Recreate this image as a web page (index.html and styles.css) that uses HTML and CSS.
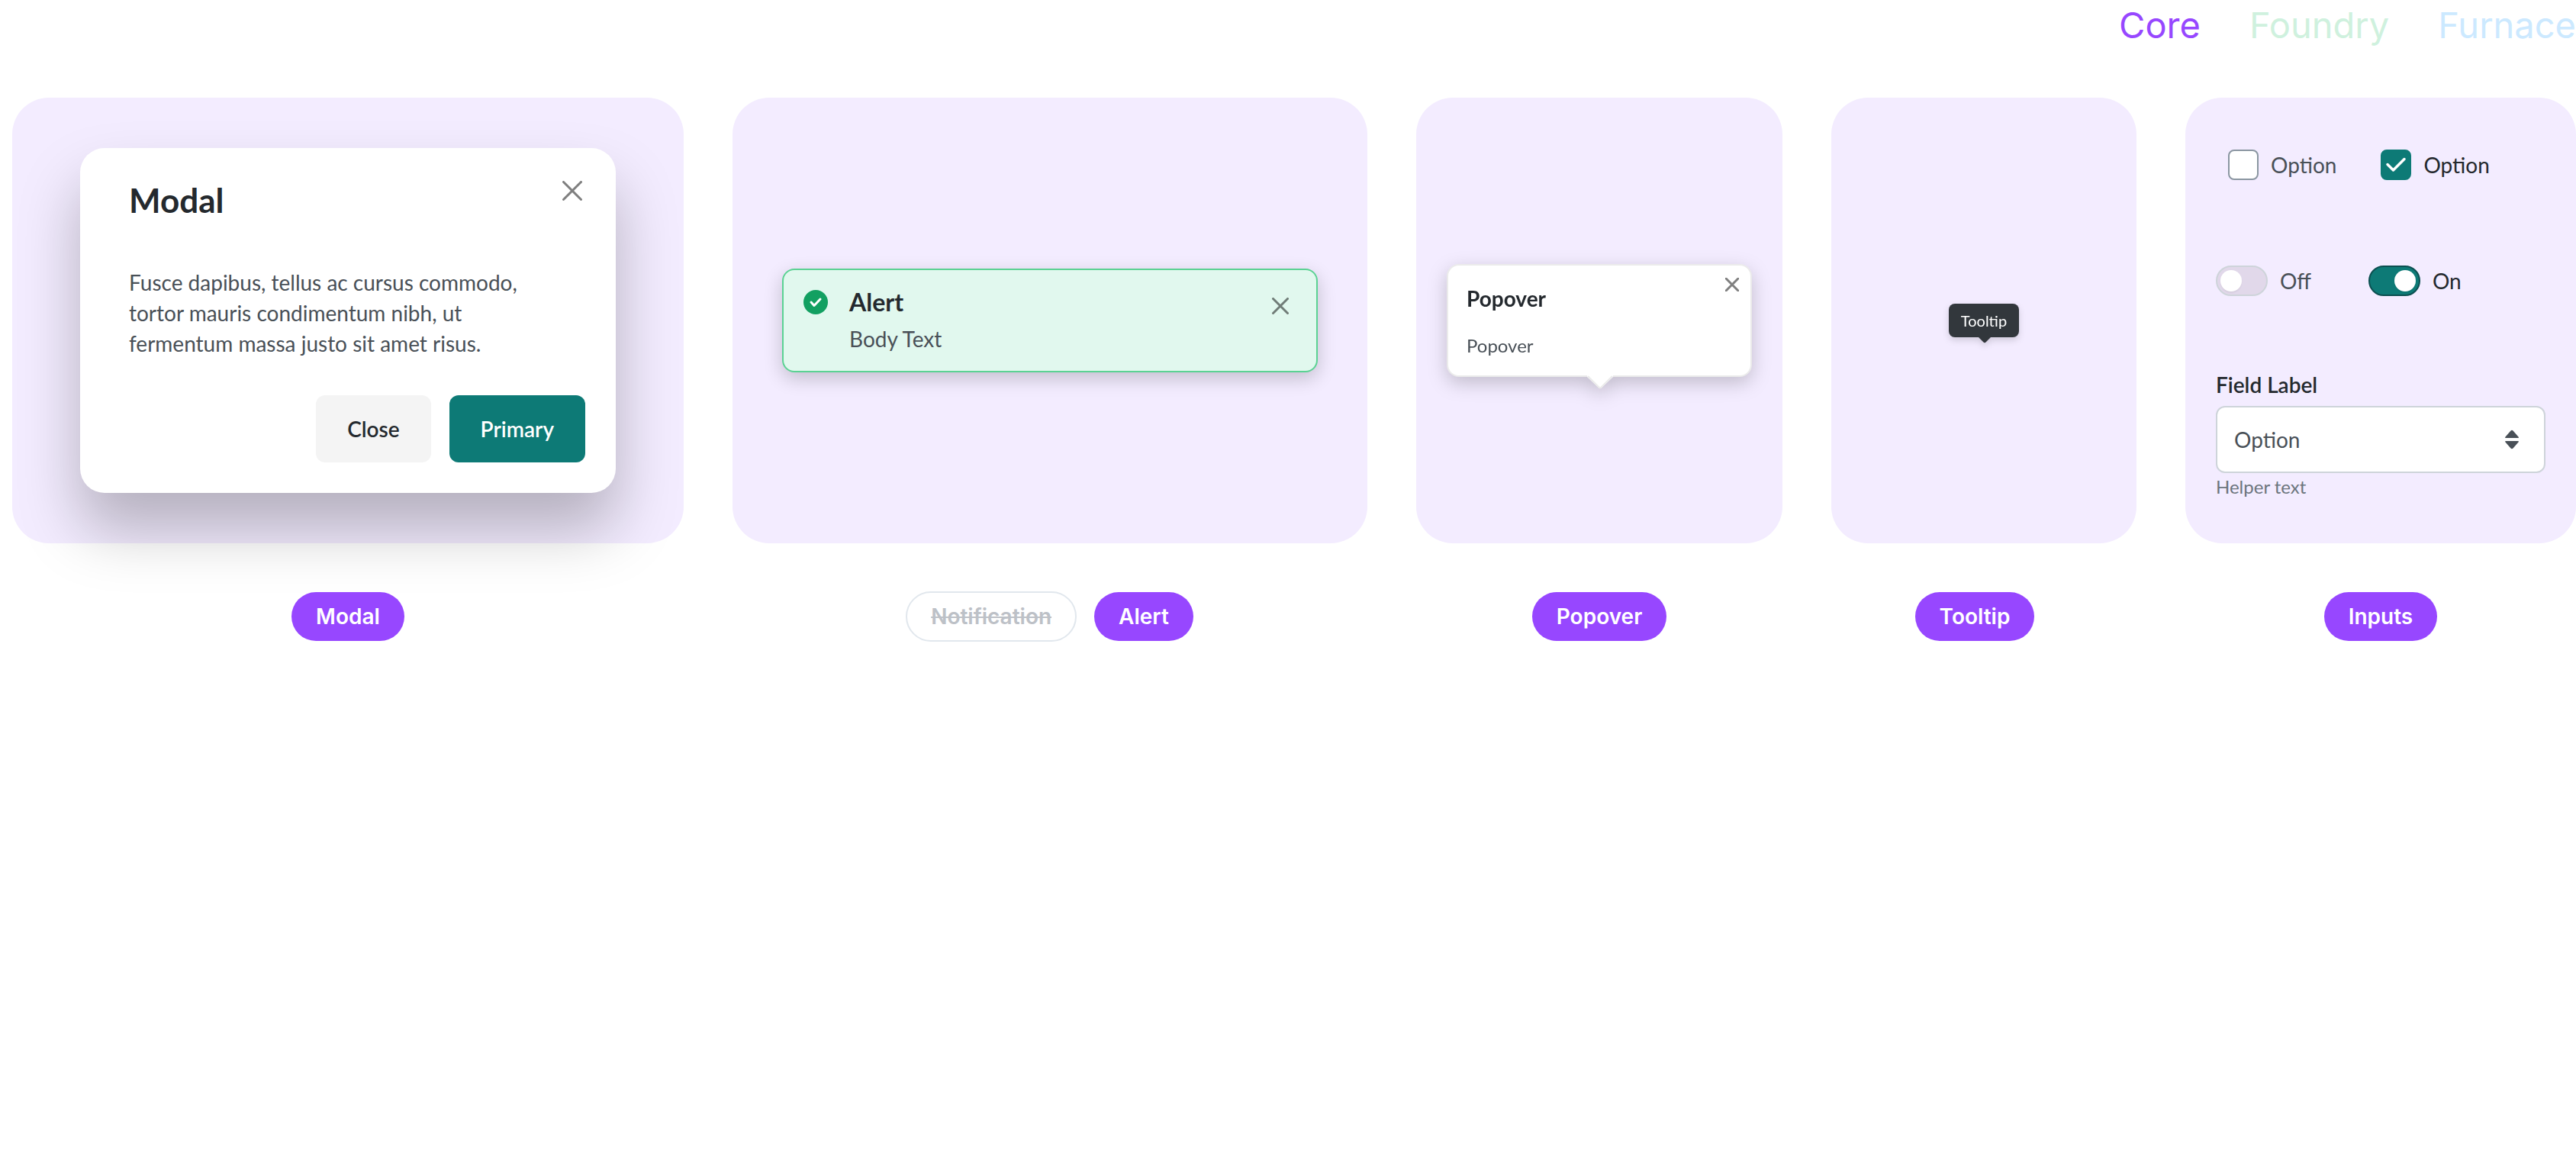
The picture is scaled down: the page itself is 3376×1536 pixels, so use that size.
FILE: index.html
```html
<!DOCTYPE html>
<html lang="en">
<head>
  <meta charset="utf-8">
  <meta name="viewport" content="width=device-width, initial-scale=1">
  <title>Core components</title>
  <link rel="stylesheet" href="styles.css">
</head>
<body>
  <nav class="libraries" aria-label="Libraries">
    <a class="library library-core" href="#core" aria-current="page">Core</a>
    <a class="library library-foundry" href="#foundry">Foundry</a>
    <a class="library library-furnace" href="#furnace">Furnace</a>
  </nav>

  <main class="gallery" id="core">
    <section class="column">
      <div class="panel">
        <div class="modal" role="dialog" aria-labelledby="modal-title">
          <header class="modal-header">
            <h2 class="modal-title" id="modal-title">Modal</h2>
            <button class="icon-button" type="button" aria-label="Close modal">
              <svg width="26" height="26" viewBox="0 0 26 26" aria-hidden="true"><path d="M1.5 1.5 24.5 24.5M24.5 1.5 1.5 24.5"/></svg>
            </button>
          </header>
          <p class="modal-body">Fusce dapibus, tellus ac cursus commodo, tortor mauris condimentum nibh, ut fermentum massa justo sit amet risus.</p>
          <footer class="modal-footer">
            <button class="button button-secondary" type="button">Close</button>
            <button class="button button-primary" type="button">Primary</button>
          </footer>
        </div>
      </div>
      <div class="tags"><span class="tag">Modal</span></div>
    </section>

    <section class="column">
      <div class="panel">
        <div class="alert" role="alert">
          <svg class="alert-icon" width="32" height="32" viewBox="0 0 32 32" aria-hidden="true">
            <circle cx="16" cy="16" r="16"/>
            <path d="M10 16 14 20.5 22 12"/>
          </svg>
          <div class="alert-content">
            <h2 class="alert-title">Alert</h2>
            <p class="alert-body">Body Text</p>
          </div>
          <button class="icon-button" type="button" aria-label="Dismiss alert">
            <svg width="22" height="22" viewBox="0 0 22 22" aria-hidden="true"><path d="M1.5 1.5 20.5 20.5M20.5 1.5 1.5 20.5"/></svg>
          </button>
        </div>
      </div>
      <div class="tags">
        <s class="tag tag-retired">Notification</s>
        <span class="tag">Alert</span>
      </div>
    </section>

    <section class="column">
      <div class="panel">
        <div class="popover">
          <h2 class="popover-title">Popover</h2>
          <p class="popover-body">Popover</p>
          <button class="icon-button popover-close" type="button" aria-label="Close popover">
            <svg width="18" height="18" viewBox="0 0 18 18" aria-hidden="true"><path d="M1 1 17 17M17 1 1 17"/></svg>
          </button>
          <svg class="popover-arrow" width="34" height="18" viewBox="0 0 34 18" aria-hidden="true">
            <path class="arrow-fill" d="M0 0H34V2L19 16Q17 18 15 16L0 2Z"/>
            <path class="arrow-edge" d="M1 1 15.5 15.5Q17 17 18.5 15.5L33 1"/>
          </svg>
        </div>
      </div>
      <div class="tags"><span class="tag">Popover</span></div>
    </section>

    <section class="column">
      <div class="panel">
        <div class="tooltip" role="tooltip">
          Tooltip
          <svg class="tooltip-arrow" width="16" height="8" viewBox="0 0 16 8" aria-hidden="true"><path d="M0 0H16L9.5 6.5Q8 8 6.5 6.5Z"/></svg>
        </div>
      </div>
      <div class="tags tags-open"><span class="tag">Tooltip</span></div>
    </section>

    <section class="column">
      <form class="panel inputs">
        <div class="checks">
          <label class="choice">
            <span class="check-box"><input class="check" type="checkbox"></span>
            Option
          </label>
          <label class="choice choice-on">
            <span class="check-box">
              <input class="check" type="checkbox" checked>
              <svg class="check-mark" width="40" height="40" viewBox="0 0 40 40" aria-hidden="true"><path d="M9 19.500 16.500 27 31 12.500"/></svg>
            </span>
            Option
          </label>
        </div>
        <div class="switches">
          <label class="choice"><input class="switch" type="checkbox" role="switch">Off</label>
          <label class="choice choice-on"><input class="switch" type="checkbox" role="switch" checked>On</label>
        </div>
        <div class="field">
          <label class="field-label" for="option">Field Label</label>
          <div class="select-box">
            <select class="select" id="option" aria-describedby="option-help">
              <option>Option</option>
            </select>
            <svg class="select-icon" width="18" height="26" viewBox="0 0 18 26" aria-hidden="true">
              <path d="M1 11Q-.5 11 .5 9.500L7.500 1.500Q9 0 10.500 1.500L17.500 9.500Q18.500 11 17 11ZM1 15Q-.5 15 .5 16.500L7.500 24.500Q9 26 10.500 24.500L17.500 16.500Q18.500 15 17 15Z"/>
            </svg>
          </div>
          <p class="field-help" id="option-help">Helper text</p>
        </div>
      </form>
      <div class="tags"><span class="tag">Inputs</span></div>
    </section>
  </main>
</body>
</html>
```
FILE: styles.css
```css
:root {
  --purple: #9747ff;
  --lilac: #f3ecff;
  --teal: #0d7a76;
  --ink: #24292e;
  --text: #495057;
  --line: #ced4da;
}

* {
  box-sizing: border-box;
}

body {
  margin: 0;
  background: #fff;
  color: var(--text);
  font: 400 28px/40px Lato, "Liberation Sans", sans-serif;
}

h2,
p {
  margin: 0;
}

button,
input,
select {
  margin: 0;
  font: inherit;
}

.libraries {
  display: flex;
  justify-content: flex-end;
  gap: 64px;
  font: 400 47px/66px Inter, sans-serif;
}

.library {
  text-decoration: none;
}

.library-core {
  color: var(--purple);
}

.library-foundry {
  color: #cff1de;
}

.library-furnace {
  color: #cce9ff;
}

.gallery {
  display: grid;
  grid-template-columns: 880fr 832fr 480fr 400fr 512fr;
  gap: 64px;
  padding: 62px 0 64px 16px;
}

.column {
  display: flex;
  flex-direction: column;
  gap: 64px;
}

.panel {
  display: flex;
  flex: 1;
  align-items: center;
  justify-content: center;
  padding: 66px 40px;
  border-radius: 48px;
  background: var(--lilac);
}

.tags {
  display: flex;
  justify-content: center;
  gap: 24px;
}

.tags-open {
  padding-right: 24px;
}

.tag {
  position: relative;
  padding: 0 32px;
  border-radius: 32px;
  background: var(--purple);
  color: #fff;
  font: 600 28px/64px Inter, sans-serif;
}

.tag-retired {
  outline: 2px solid #e1e7ed;
  outline-offset: -1px;
  background: #fff;
  color: #bdc1c7;
}

.icon-button {
  display: flex;
  padding: 0;
  border: 0;
  background: none;
  cursor: pointer;
}

.icon-button path {
  fill: none;
  stroke: #000;
  stroke-linecap: round;
  stroke-opacity: .5;
  stroke-width: 3;
}

/* Modal */

.modal {
  display: flex;
  flex-direction: column;
  width: 702px;
  padding: 40px;
  border-radius: 32px;
  background: #fff;
  box-shadow: 0 48px 80px rgba(0, 0, 0, .26);
}

.modal-header {
  display: flex;
  align-items: flex-start;
  justify-content: space-between;
  padding: 0 4px 60px 24px;
}

.modal-header .icon-button {
  padding-top: 3px;
}

.modal-title {
  color: var(--ink);
  font-size: 44px;
  font-weight: 700;
  line-height: 56px;
}

.modal-body {
  padding: 0 24px 48px;
}

.modal-footer {
  display: flex;
  justify-content: flex-end;
  gap: 24px;
}

.button {
  padding: 24px 41px;
  border: 0;
  border-radius: 12px;
  font-weight: 600;
}

.button-secondary {
  background: #f4f4f4;
  color: var(--ink);
}

.button-primary {
  background: var(--teal);
  color: #fff;
}

/* Alert */

.alert {
  display: flex;
  align-items: flex-start;
  width: 702px;
  padding: 20px 36px 22px 26px;
  border: 2px solid #5bd293;
  border-radius: 16px;
  background: #e1f8ee;
  box-shadow: 0 8px 24px rgba(0, 0, 0, .2);
}

.alert-icon {
  margin: 6px 28px 0 0;
}

.alert-icon circle {
  fill: #12a061;
}

.alert-icon path {
  fill: none;
  stroke: #fff;
  stroke-linecap: round;
  stroke-linejoin: round;
  stroke-width: 3;
}

.alert-content {
  flex: 1;
}

.alert-title {
  padding-bottom: 6px;
  color: var(--ink);
  font-size: 32px;
  font-weight: 700;
  line-height: 44px;
}

.alert .icon-button {
  padding-top: 16px;
}

/* Popover */

.popover {
  position: relative;
  width: 400px;
  padding: 23px 24px 21px;
  border: 2px solid #ebebeb;
  border-radius: 16px;
  background: #fff;
  filter: drop-shadow(0 8px 12px rgba(0, 0, 0, .2));
}

.popover-title {
  padding-bottom: 24px;
  color: var(--ink);
  font-size: 28px;
  font-weight: 700;
  line-height: 40px;
}

.popover-body {
  font-size: 24px;
  line-height: 36px;
}

.popover-close {
  position: absolute;
  top: 16px;
  right: 15px;
}

.popover-arrow {
  position: absolute;
  top: 100%;
  left: 50%;
  margin-left: -16px;
}

.popover-arrow .arrow-fill {
  fill: #fff;
}

.popover-arrow .arrow-edge {
  fill: none;
  stroke: #ebebeb;
  stroke-width: 2;
}

/* Tooltip */

.tooltip {
  position: relative;
  padding: 0 16px;
  border-radius: 8px;
  background: #32373c;
  color: #fff;
  font-size: 20px;
  line-height: 44px;
  filter: drop-shadow(0 4px 4px rgba(0, 0, 0, .14));
}

.tooltip-arrow {
  position: absolute;
  top: 100%;
  left: 50%;
  margin-left: -7px;
  fill: #32373c;
}

/* Inputs */

.inputs {
  flex-direction: column;
  align-items: stretch;
  justify-content: flex-start;
  padding-bottom: 40px;
}

.checks,
.switches {
  display: flex;
}

.checks {
  gap: 58px;
  padding: 2px 16px 112px;
}

.switches {
  gap: 75px;
  padding-bottom: 96px;
}

.choice {
  display: flex;
  gap: 16px;
}

.choice-on {
  color: var(--ink);
}

.check-box {
  display: grid;
}

.check,
.check-mark {
  grid-area: 1 / 1;
}

.check {
  width: 40px;
  height: 40px;
  border: 2px solid #8a96a1;
  border-radius: 8px;
  background: #fff;
  appearance: none;
}

.check:checked {
  border-color: var(--teal);
  background: var(--teal);
}

.check-mark {
  fill: none;
  stroke: #fff;
  stroke-linecap: round;
  stroke-linejoin: round;
  stroke-width: 3.5;
  pointer-events: none;
}

.switch {
  display: flex;
  width: 68px;
  height: 40px;
  padding: 4px;
  border: 2px solid var(--line);
  border-radius: 20px;
  background: #e1d8ea;
  appearance: none;
}

.switch::before {
  width: 28px;
  height: 28px;
  border-radius: 50%;
  background: #fff;
  box-shadow: 0 2px 2px rgba(0, 0, 0, .05);
  content: "";
}

.switch:checked {
  justify-content: flex-end;
  border-color: #0b4f50;
  background: var(--teal);
}

.field {
  display: flex;
  flex-direction: column;
}

.field-label {
  padding-bottom: 8px;
  color: var(--ink);
  font-weight: 600;
}

.select-box {
  position: relative;
}

.select {
  display: block;
  width: 100%;
  padding: 22px;
  border: 2px solid var(--line);
  border-radius: 12px;
  background: #fff;
  color: var(--text);
  appearance: none;
}

.select-icon {
  position: absolute;
  top: 31px;
  right: 35px;
  fill: var(--text);
  pointer-events: none;
}

.field-help {
  color: #6c757d;
  font-size: 24px;
  line-height: 36px;
}
```
